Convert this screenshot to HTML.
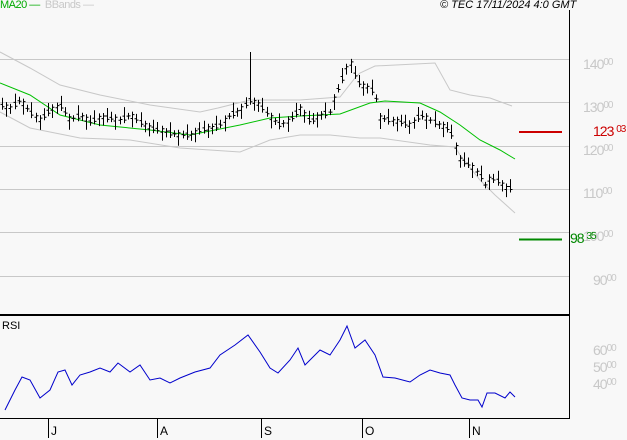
<!DOCTYPE html>
<html><head><meta charset="utf-8"><style>
body{margin:0;background:#f8f8f8;width:627px;height:440px;overflow:hidden;font-family:"Liberation Sans",sans-serif}
svg{position:absolute;left:0;top:0}
.lab{position:absolute;font-size:14px;color:#c8c8c8;letter-spacing:-1px}
.lab sup{font-size:10px;vertical-align:4px}
</style></head><body>
<svg width="627" height="440" id="s">
<g stroke="#c8c8c8" stroke-width="1">
<line x1="0" y1="59.5" x2="569" y2="59.5"/><line x1="0" y1="102.5" x2="569" y2="102.5"/><line x1="0" y1="146.5" x2="569" y2="146.5"/><line x1="0" y1="189.5" x2="569" y2="189.5"/><line x1="0" y1="232.5" x2="569" y2="232.5"/><line x1="0" y1="276.5" x2="569" y2="276.5"/>
</g>
<polyline fill="none" stroke="#c8c8c8" points="0,52 30,68 60,85 100,95 150,105 200,112 218,108 250,100 300,100 340,97 355,78 360,73 375,66 435,63 450,90 470,95 490,98 512,106"/>
<polyline fill="none" stroke="#c8c8c8" points="0,112 30,128 80,138 130,140 180,148 240,152 270,140 300,135 330,135 360,138 380,138 430,145 455,147 460,155 480,180 495,195 515,213"/>
<polyline fill="none" stroke="#00c000" points="0,83 30,95 60,115 100,125 150,130 190,135 240,125 270,118 300,116 340,114 370,103 385,101 420,103 440,112 460,125 480,140 500,150 515,159"/>
<path id="bars" fill="none" stroke="#000" stroke-width="1"/>
<line x1="569.5" y1="10" x2="569.5" y2="418" stroke="#000"/>
<line x1="0" y1="315" x2="570" y2="315" stroke="#000" stroke-width="2"/>
<line x1="0" y1="418.5" x2="570" y2="418.5" stroke="#000"/>
<polyline fill="none" stroke="#0000cc" points="5,410 15,390 22,377 30,380 40,398 50,390 58,372 65,370 72,385 80,375 90,372 100,368 110,372 118,363 130,372 140,365 150,380 160,378 170,383 180,378 195,372 210,368 220,355 235,345 248,335 260,352 270,368 278,373 290,360 298,348 305,365 320,350 330,355 340,340 347,326 355,348 365,340 375,355 383,377 395,378 410,382 420,375 430,370 440,373 450,375 455,385 462,398 470,400 478,400 482,407 487,393 495,393 505,398 510,392 515,397"/>
<line x1="519" y1="132" x2="562" y2="132" stroke="#cc0000" stroke-width="2"/>
<line x1="519" y1="239.5" x2="562" y2="239.5" stroke="#008800" stroke-width="2"/>
<g stroke="#000"><line x1="48.5" y1="418" x2="48.5" y2="438"/><line x1="157.5" y1="418" x2="157.5" y2="438"/><line x1="261.5" y1="418" x2="261.5" y2="438"/><line x1="362.5" y1="418" x2="362.5" y2="438"/><line x1="469.5" y1="418" x2="469.5" y2="438"/></g>
</svg>
<div style="position:absolute;left:0;top:-1px;font-size:11px;color:#00aa00;letter-spacing:-0.5px">MA20 —&nbsp; <span style="color:#c8c8c8">BBands —</span></div>
<div style="position:absolute;left:440px;top:-1px;font-size:11px;font-style:italic;color:#000">© TEC 17/11/2024 4:0 GMT</div>
<div style="position:absolute;left:2px;top:320px;font-size:11px">RSI</div>
<div class="lab" style="left:583px;top:56px">140<sup>00</sup></div>
<div class="lab" style="left:583px;top:99px">130<sup>00</sup></div>
<div class="lab" style="left:583px;top:142px">120<sup>00</sup></div>
<div class="lab" style="left:583px;top:185px">110<sup>00</sup></div>
<div class="lab" style="left:583px;top:228px">100<sup>00</sup></div>
<div class="lab" style="left:593px;top:272px">90<sup>00</sup></div>
<div class="lab" style="left:593px;top:342px">60<sup>00</sup></div>
<div class="lab" style="left:593px;top:359px">50<sup>00</sup></div>
<div class="lab" style="left:593px;top:376px">40<sup>00</sup></div>
<div class="lab" style="left:593px;top:123px;color:#cc0000">123 <sup>03</sup></div>
<div class="lab" style="left:570px;top:230px;color:#008800">98 <sup>35</sup></div>
<div style="position:absolute;left:51px;top:424px;font-size:12px">J</div>
<div style="position:absolute;left:160px;top:424px;font-size:12px">A</div>
<div style="position:absolute;left:264px;top:424px;font-size:12px">S</div>
<div style="position:absolute;left:365px;top:424px;font-size:12px">O</div>
<div style="position:absolute;left:472px;top:424px;font-size:12px">N</div>
<script>
var p=[[0,105],[10,108],[20,100],[30,112],[40,120],[50,110],[60,105],[70,120],[80,115],[90,122],[100,117],[110,118],[120,120],[130,115],[140,122],[150,128],[160,130],[170,133],[180,135],[190,135],[200,130],[210,128],[220,125],[230,115],[240,110],[250,100],[260,105],[270,117],[280,125],[290,120],[300,108],[310,122],[320,115],[330,112],[335,95],[340,85],[345,70],[350,62],[355,75],[360,85],[370,88],[375,95],[380,118],[390,120],[400,122],[410,125],[420,115],[430,120],[440,125],[450,130],[455,145],[460,160],[470,165],[480,175],[485,185],[490,178],[500,182],[505,188],[513,188]];
function f(x){for(var i=0;i<p.length-1;i++)if(x<=p[i+1][0]){var t=(x-p[i][0])/(p[i+1][0]-p[i][0]);return p[i][1]+t*(p[i+1][1]-p[i][1]);}return p[p.length-1][1];}
var d="",s=7;
for(var x=2;x<=513;x+=4.2){var xx=Math.round(x)+.5,y=f(x),r=Math.sin(s++*1.7);var h=6+Math.abs(r)*10;var a=y-h/2+r*3,b=y+h/2+r*3;
if(Math.abs(xx-251.5)<2.2){a=52;}
d+="M"+xx+" "+a.toFixed(1)+"V"+b.toFixed(1)+"M"+(xx-2)+" "+(y+r*2).toFixed(1)+"h2M"+xx+" "+(y-r*2).toFixed(1)+"h2";}
document.getElementById("bars").setAttribute("d",d);
</script>
</body></html>
